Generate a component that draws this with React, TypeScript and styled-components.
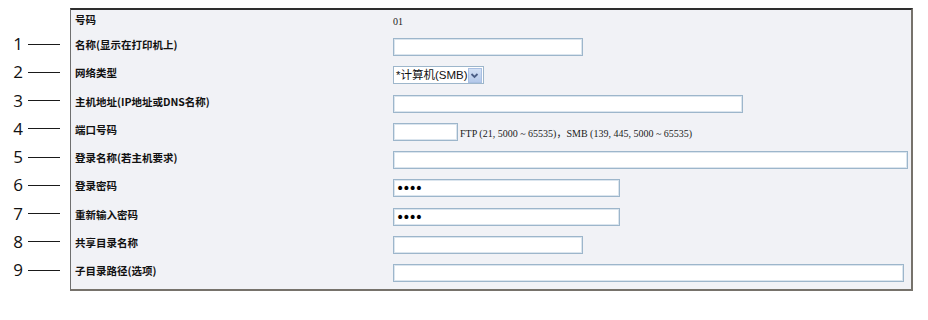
import React from "react";
import styled, { createGlobalStyle } from "styled-components";

const Global = createGlobalStyle`
  html, body { margin: 0; padding: 0; background: #ffffff; }
  body { font-family: "Liberation Sans", "Noto Sans CJK SC", sans-serif; }
`;

const ROW_H = 28.25;

const Page = styled.div`
  display: flex;
  padding-top: 8px;
  width: 928px;
  height: 320px;
  box-sizing: border-box;
`;

const Callouts = styled.div`
  width: 70px;
  padding-top: 25px;
  display: flex;
  flex-direction: column;
`;

const Callout = styled.div`
  height: ${ROW_H}px;
  display: flex;
  align-items: flex-start;
`;

const CalloutInner = styled.div`
  height: 22px;
  display: flex;
  align-items: center;
`;

const Digit = styled.span`
  width: 23px;
  text-align: right;
  font-family: "Open Sans", "Liberation Sans", sans-serif;
  font-size: 17px;
  line-height: 22px;
  color: #111;
`;

const Leader = styled.span`
  display: block;
  width: 32px;
  height: 1px;
  margin-left: 5px;
  background: #1a1a1a;
`;

const Panel = styled.div`
  width: 843px;
  height: 283px;
  box-sizing: border-box;
  background: #f1f2f6;
  border-top: 2px solid #2e2e2e;
  border-left: 1px solid #6f6f6f;
  border-right: 2px solid #76726b;
  border-bottom: 2px solid #76726b;
  display: grid;
  grid-template-columns: 322px 1fr;
  grid-template-rows: 23px repeat(9, ${ROW_H}px);
  align-content: start;
`;

const Label = styled.div<{ $head?: boolean }>`
  padding-left: 4px;
  padding-top: ${(p) => (p.$head ? 3 : 5)}px;
  font-family: "Noto Sans CJK SC", "Liberation Sans", sans-serif;
  font-weight: 700;
  font-size: 10.5px;
  line-height: 14px;
  color: #111;
  white-space: nowrap;
`;

const Value = styled.div<{ $head?: boolean }>`
  display: flex;
  align-items: ${(p) => (p.$head ? "center" : "flex-start")};
  padding-top: ${(p) => (p.$head ? 0 : 5)}px;
  gap: 2px;
`;

const Plain = styled.span<{ $pt?: number }>`
  font-family: "Liberation Serif", "Noto Sans CJK SC", serif;
  font-size: 10px;
  color: #222;
  padding-top: ${(p) => p.$pt ?? 0}px;
`;

const Field = styled.input<{ $w: number }>`
  width: ${(p) => p.$w}px;
  height: 18px;
  box-sizing: border-box;
  margin: 0;
  padding: 0 2px;
  background: #ffffff;
  border: 1px solid #9db6cb;
  box-shadow: inset 0 0 0 1px #dbe5ee;
  outline: none;
  font-family: "Liberation Sans", sans-serif;
  font-size: 11px;
  color: #000;
  &[type="password"] {
    font-family: "DejaVu Sans", sans-serif;
    font-size: 14px;
    letter-spacing: -2px;
  }
`;

const Select = styled.div`
  width: 91px;
  height: 18px;
  box-sizing: border-box;
  display: flex;
  align-items: center;
  background: #ffffff;
  border: 1px solid #9db6cb;
  padding-left: 2px;
  font-family: "Liberation Sans", "Noto Sans CJK SC", sans-serif;
  font-size: 11.5px;
  color: #111;
`;

const SelectText = styled.span`
  flex: 1;
  white-space: nowrap;
  line-height: 16px;
`;

const SelectButton = styled.span`
  width: 15px;
  height: 15px;
  margin-right: 1px;
  box-sizing: border-box;
  display: flex;
  align-items: center;
  justify-content: center;
  background: linear-gradient(#d3e1f5, #b4c9ea);
  border: 1px solid #a9bfe2;
`;

const Chevron = () => (
  <svg width="9" height="7" viewBox="0 0 9 7">
    <path d="M1.5 2 L4.5 5 L7.5 2" fill="none" stroke="#4b5f86" strokeWidth="1.8" />
  </svg>
);

const rows: { n: number; label: string; control: React.ReactNode }[] = [
  { n: 1, label: "名称(显示在打印机上)", control: <Field $w={190} /> },
  {
    n: 2,
    label: "网络类型",
    control: (
      <Select>
        <SelectText>*计算机(SMB)</SelectText>
        <SelectButton>
          <Chevron />
        </SelectButton>
      </Select>
    ),
  },
  { n: 3, label: "主机地址(IP地址或DNS名称)", control: <Field $w={350} /> },
  {
    n: 4,
    label: "端口号码",
    control: (
      <>
        <Field $w={65} />
        <Plain $pt={2}>FTP (21, 5000 ~ 65535)，SMB (139, 445, 5000 ~ 65535)</Plain>
      </>
    ),
  },
  { n: 5, label: "登录名称(若主机要求)", control: <Field $w={515} /> },
  { n: 6, label: "登录密码", control: <Field $w={227} type="password" defaultValue="abcd" /> },
  { n: 7, label: "重新输入密码", control: <Field $w={227} type="password" defaultValue="abcd" /> },
  { n: 8, label: "共享目录名称", control: <Field $w={190} /> },
  { n: 9, label: "子目录路径(选项)", control: <Field $w={511} /> },
];

export default function App() {
  return (
    <>
      <Global />
      <Page>
        <Callouts>
          {rows.map((r) => (
            <Callout key={r.n}>
              <CalloutInner>
                <Digit>{r.n}</Digit>
                <Leader />
              </CalloutInner>
            </Callout>
          ))}
        </Callouts>
        <Panel>
          <Label $head>号码</Label>
          <Value $head>
            <Plain>01</Plain>
          </Value>
          {rows.map((r) => (
            <React.Fragment key={r.n}>
              <Label>{r.label}</Label>
              <Value>{r.control}</Value>
            </React.Fragment>
          ))}
        </Panel>
      </Page>
    </>
  );
}
